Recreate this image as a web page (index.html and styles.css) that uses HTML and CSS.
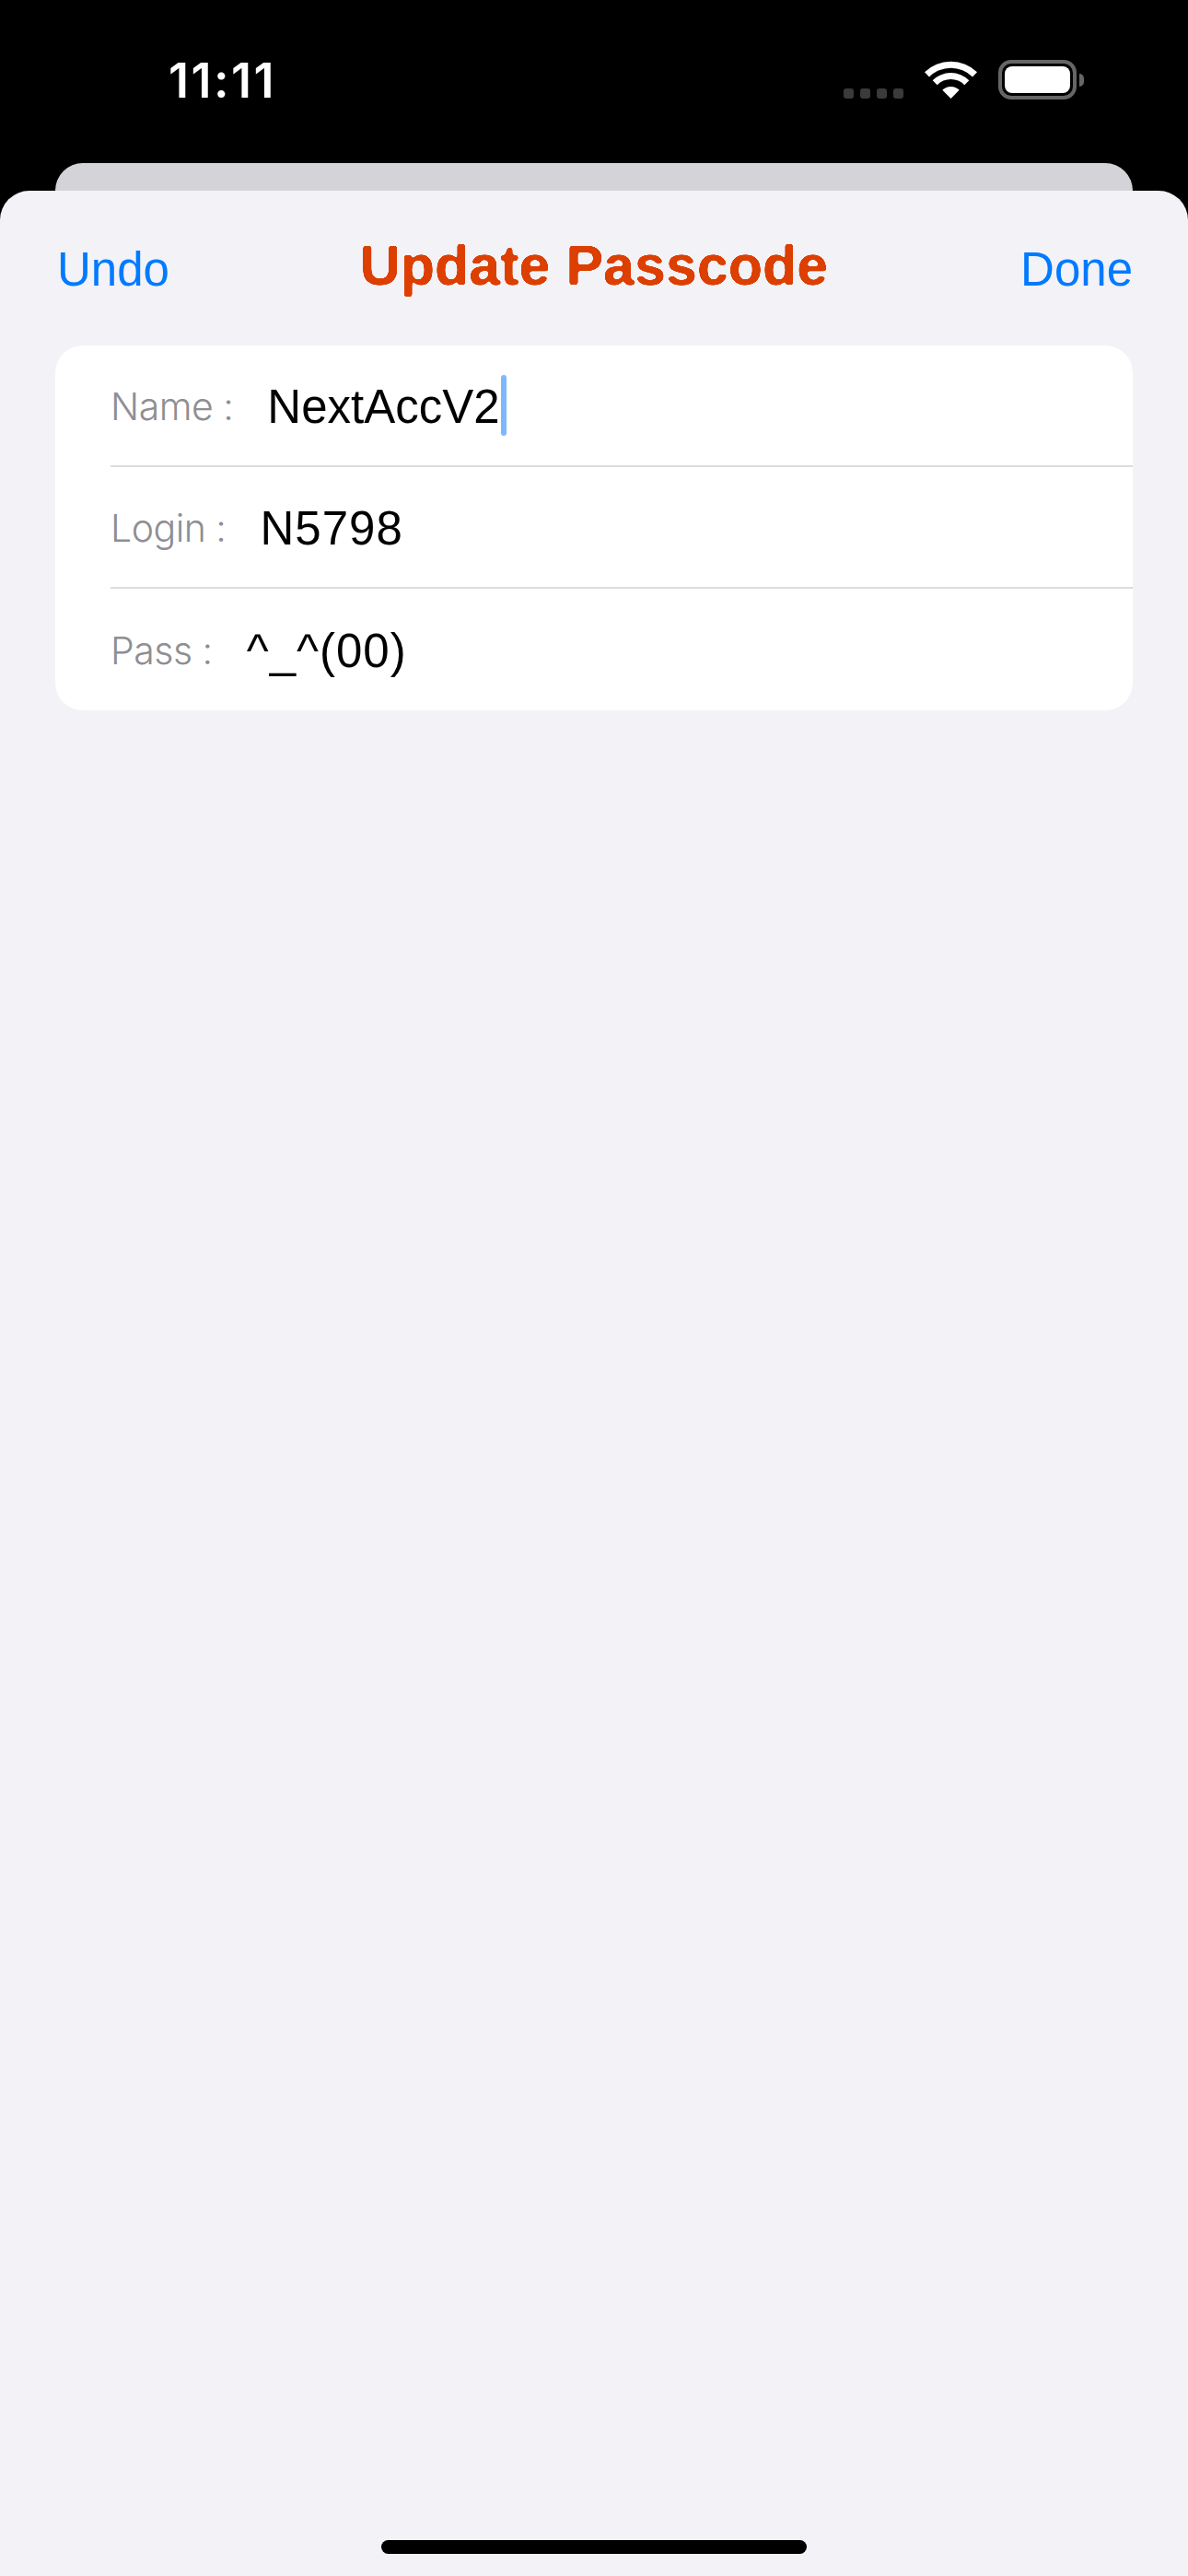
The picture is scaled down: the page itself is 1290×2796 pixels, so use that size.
FILE: index.html
```html
<!DOCTYPE html>
<html lang="en">
<head>
<meta charset="utf-8">
<title>Update Passcode</title>
<link rel="stylesheet" href="styles.css">
</head>
<body>
<svg class="defs" aria-hidden="true">
  <filter id="round-text" x="-2%" y="-10%" width="104%" height="120%" color-interpolation-filters="sRGB">
    <feGaussianBlur in="SourceAlpha" stdDeviation="1.6" result="soft"/>
    <feComponentTransfer in="soft" result="mask">
      <feFuncA type="linear" slope="9" intercept="-3.6"/>
    </feComponentTransfer>
    <feFlood flood-color="#dc3f00"/>
    <feComposite in2="mask" operator="in"/>
  </filter>
</svg>
<div class="screen">
  <header class="status">
    <span class="time">11:11</span>
    <div class="status-icons">
      <div class="signal"><i></i><i></i><i></i><i></i></div>
      <svg class="wifi" viewBox="0 0 57 41" aria-hidden="true">
        <path d="M0 12.3A41 41 0 0 1 57 12.3L52 17.4A33.5 33.5 0 0 0 5 17.4Z"/>
        <path d="M8.7 21.2A28 28 0 0 1 48.3 21.2L43.35 26.15A21 21 0 0 0 13.65 26.15Z"/>
        <path d="M19.3 31.8A13 13 0 0 1 37.7 31.8L28.5 41Z"/>
      </svg>
      <div class="battery"><div class="battery-body"><div class="battery-level"></div></div><div class="battery-nub"></div></div>
    </div>
  </header>
  <div class="back-card"></div>
  <main class="sheet">
    <nav class="nav">
      <a class="nav-btn">Undo</a>
      <h1 class="nav-title">Update Passcode</h1>
      <a class="nav-btn nav-btn-right">Done</a>
    </nav>
    <section class="form">
      <div class="row"><span class="label">Name :</span><span class="value">NextAccV2</span><span class="caret"></span></div>
      <div class="row"><span class="label">Login :</span><span class="value value-wide">N5798</span></div>
      <div class="row"><span class="label">Pass :</span><span class="value value-wide">^_^(00)</span></div>
    </section>
    <div class="home-wrap"><div class="home-bar"></div></div>
  </main>
</div>
</body>
</html>
```
FILE: styles.css
```css
* { box-sizing: border-box; }
html, body { margin: 0; padding: 0; background: #000; }
.defs { display: block; width: 0; height: 0; }
.screen { width: 1290px; height: 2796px; display: flex; flex-direction: column; overflow: hidden; font-family: "Liberation Sans", Arial, sans-serif; }

.status { height: 177px; display: flex; align-items: flex-start; padding: 58px 113px 0 183px; color: #fff; }
.time { font-family: Inter, sans-serif; font-weight: 600; font-size: 52px; line-height: 60px; letter-spacing: 2.5px; }
.status-icons { margin-left: auto; margin-top: 7px; height: 43px; display: flex; align-items: flex-end; gap: 23px; }
.signal { display: flex; gap: 7px; margin-bottom: 1px; }
.signal i { display: block; width: 11px; height: 11px; border-radius: 3px; background: #3a3a3a; }
.wifi { display: block; width: 57px; height: 41px; margin-bottom: 1px; fill: #fff; }
.battery { display: flex; align-items: center; gap: 3px; height: 43px; }
.battery-body { width: 85px; height: 43px; border: 4px solid #666; border-radius: 14px; padding: 3px; }
.battery-level { height: 100%; background: #fff; border-radius: 8px; }
.battery-nub { width: 5px; height: 14px; background: #666; border-radius: 0 7px 7px 0; }

.back-card { height: 30px; margin: 0 60px; background: #d4d4d8; border-radius: 30px 30px 0 0; }
.sheet { flex: 1; display: flex; flex-direction: column; background: #f2f2f7; border-radius: 32px 32px 0 0; padding: 45px 60px 0; }

.nav { display: grid; grid-template-columns: 1fr auto 1fr; align-items: baseline; height: 123px; }
.nav-btn { color: #007aff; font-size: 51px; line-height: 72px; padding: 0 0 0 2px; position: relative; top: 1px; }
.nav-btn-right { text-align: right; padding: 0; }
.nav-title { margin: 0; color: #dc3f00; font-size: 61px; line-height: 72px; font-weight: 700; filter: url(#round-text); }

.form { background: #fff; border-radius: 30px; padding-left: 60px; height: 396px; }
.row { height: 132px; display: flex; align-items: center; gap: 37px; border-bottom: 2px solid #dcdcde; }
.row:last-child { border-bottom: 0; }
.label { color: #8e8e93; font-family: Inter, sans-serif; font-weight: 300; font-size: 41px; letter-spacing: -0.5px; line-height: 50px; margin-top: 2px; }
.value { color: #000; font-size: 51px; line-height: 60px; margin-top: 3px; }
.value-wide { letter-spacing: 1px; }
.caret { width: 6px; height: 66px; margin-left: -36px; border-radius: 3px; background: #7db8ff; }

.home-wrap { margin-top: auto; padding-bottom: 24px; display: flex; justify-content: center; }
.home-bar { width: 462px; height: 15px; border-radius: 8px; background: #000; }
```
